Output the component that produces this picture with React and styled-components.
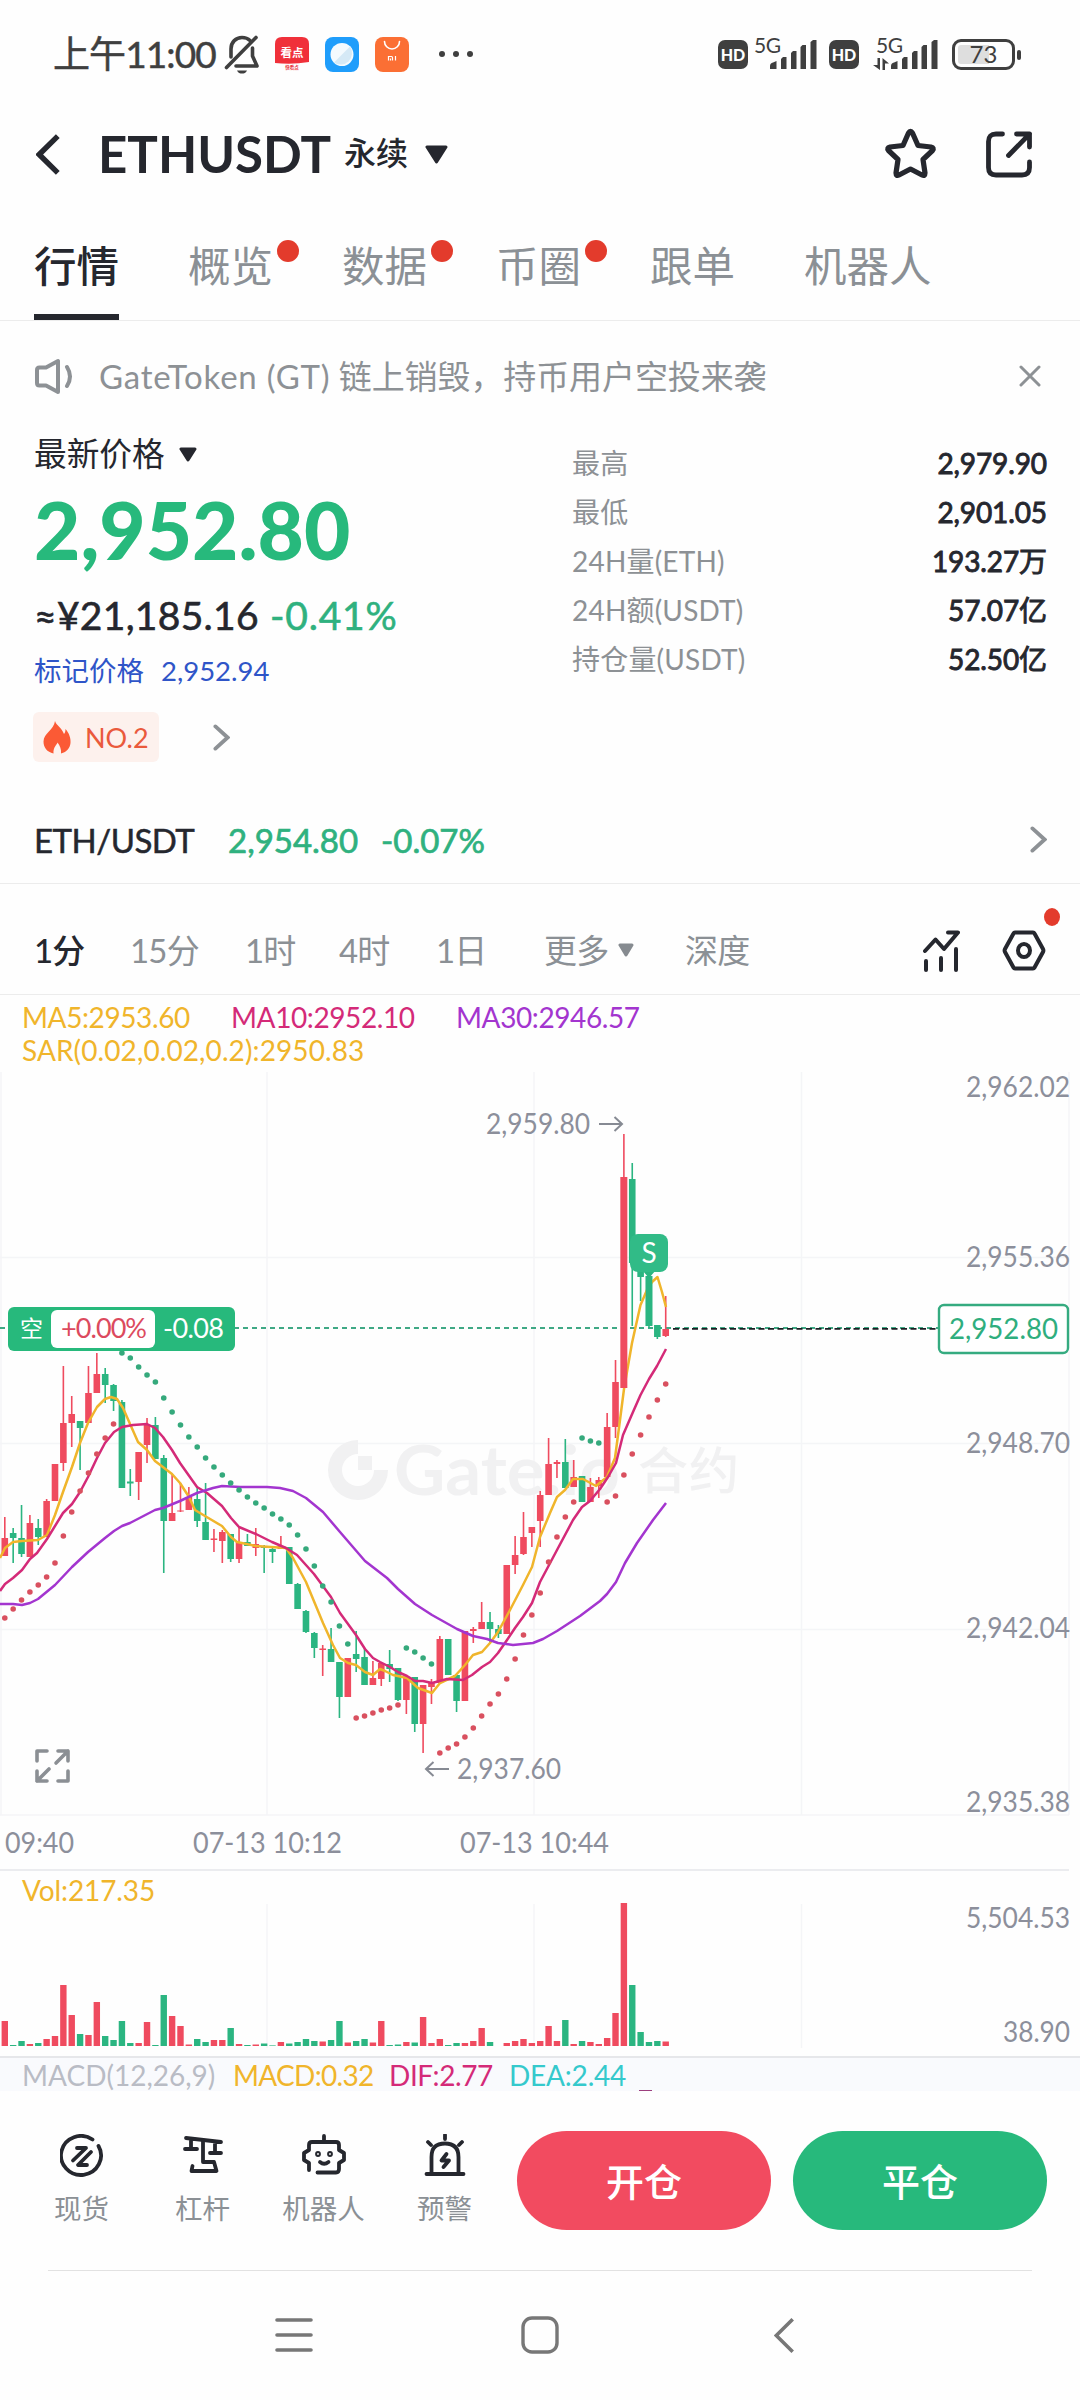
import React from "react";
import styled, { createGlobalStyle } from "styled-components";

const UP = "#ef4b5f";
const DOWN = "#2bb581";
const GRID = "#f4f5f7";
const FONT = 'Lato, "Noto Sans CJK SC", sans-serif';

const STEP = 8.366;
const X0 = 4.8;
const candleX = (i) => X0 + i * STEP;

// [color, wick top, body top, body bottom, wick bottom, volume height]
const candles = [
  ["R", 517, 538, 556, 556, 25],
  ["G", 528, 533, 538, 563, 1],
  ["G", 505, 538, 554, 557, 5],
  ["R", 515, 523, 557, 557, 2],
  ["G", 519, 528, 537, 545, 3],
  ["R", 499, 501, 537, 537, 7],
  ["R", 464, 464, 501, 501, 10],
  ["R", 366, 423, 463, 471, 61],
  ["R", 396, 414, 423, 447, 31],
  ["G", 421, 421, 428, 470, 12],
  ["R", 366, 393, 423, 423, 11],
  ["R", 353, 374, 393, 393, 44],
  ["G", 368, 374, 385, 403, 10],
  ["G", 384, 385, 401, 411, 6],
  ["G", 400, 402, 488, 488, 25],
  ["G", 469, 481.5, 483.5, 496, 3],
  ["R", 452, 452, 482, 500, 3],
  ["R", 418, 425, 445, 463, 24],
  ["G", 417, 425, 459, 459, 1],
  ["G", 455, 458, 521, 573, 51],
  ["R", 474, 513, 521, 521, 30],
  ["R", 483, 510.5, 511.5, 512, 20],
  ["R", 487, 497, 510, 510, 1.5],
  ["G", 487, 499, 521, 527, 7],
  ["G", 483, 522, 540, 540, 4],
  ["R", 529, 538.5, 540, 552, 6],
  ["R", 530, 532, 541, 563, 6],
  ["G", 534, 534, 559, 562, 18],
  ["R", 527, 542, 559, 563, 2],
  ["G", 534, 542, 546, 546, 1],
  ["R", 528, 544, 548, 556, 1.5],
  ["G", 545, 546, 548, 573, 2.5],
  ["G", 548, 549, 552, 563, 0.6],
  ["R", 536, 546, 549, 549, 4],
  ["G", 547, 547, 584, 584, 2.5],
  ["G", 583, 584, 609, 609, 4],
  ["G", 610, 611, 632, 633, 7],
  ["G", 632, 633, 648, 658, 5],
  ["R", 645, 648.5, 650, 676, 4.5],
  ["G", 628, 649, 662, 662, 6],
  ["G", 662, 662, 697, 718, 25],
  ["R", 658, 658, 697, 697, 3.5],
  ["G", 631, 654, 659, 672, 5],
  ["G", 648, 657, 685, 685, 7],
  ["R", 661, 678, 685, 685, 3.5],
  ["R", 662, 663, 679, 686, 25],
  ["G", 650, 664, 669, 682, 1],
  ["G", 668, 668, 700, 701, 1.5],
  ["R", 678, 678, 700, 714, 4],
  ["G", 677, 677, 724, 732, 3.5],
  ["R", 685, 685, 724, 753, 29],
  ["R", 679, 683, 687, 704, 3],
  ["R", 636, 639, 683, 683, 7],
  ["G", 639, 639, 675, 675, 1],
  ["G", 675, 675, 701, 712, 3],
  ["R", 631, 631, 701, 701, 3],
  ["R", 627, 629, 631, 643, 5],
  ["R", 602, 622, 629, 629, 18],
  ["G", 612, 622, 629, 643, 4],
  ["G", 625, 629, 634, 638, 0],
  ["R", 565, 565, 634, 634, 3],
  ["R", 536, 555, 565, 574, 5],
  ["R", 512, 537, 554, 555, 7],
  ["R", 527, 527, 533, 547, 3],
  ["R", 491, 495, 521, 547, 5],
  ["R", 438, 464, 495, 495, 20],
  ["R", 460, 462, 464, 478, 5],
  ["G", 439, 462, 488, 488, 26],
  ["R", 460, 477, 487, 487, 2],
  ["G", 476, 476, 502, 502, 5],
  ["R", 478, 487, 502, 502, 4],
  ["R", 477, 480, 486, 498, 2],
  ["R", 413, 427, 477, 477, 8],
  ["R", 360, 382, 427, 438, 33],
  ["R", 134, 177, 388, 390, 143],
  ["G", 163, 179, 263, 326, 61],
  ["G", 263, 263, 277, 301, 14],
  ["G", 276, 276, 326, 328, 4],
  ["G", 325, 325, 337, 339, 5],
  ["R", 296, 329, 336, 337, 4.5],
];

const ma5 =
  "0,558 5,548 13,542 22,541 38,540 47,535 55,515 63,492 72,467 80,443 88,423 97,407 105,399 111,397 117,399 123,408 138,442 147,450 155,461 172,474 180,483 189,497 195,510 205,516 222,526 231,537 237,542 256,546 286,548 293,558 306,582 323,623 333,645 340,658 348,663 356,665 365,672 373,675 380,669 385,671 393,675 407,678 418,688 432,693 440,683 455,676 465,665 473,655 482,652 490,643 498,632 510,610 523,585 532,567 540,537 550,513 557,497 565,490 573,479 583,479 596,486 607,477 615,458 620,420 624,389 632,343 640.5,305 647,290 652,282 657.5,277 662,292 666,307";
const ma10 =
  "0,591 5,584 13,578 22,570 30,559 37,553 47,539 63,513 72,504 80,492 88,477 97,458 105,443 114,432 122,427 133,425 147,424 155,428 163,437 172,450 180,463 197,487 207,493 222,506 231,518 239,527 256,534 272,542 286,548 297,555 314,574 331,597 340,613 356,635 365,649 373,658 380,662 390,667 398,672 407,676 415,681 423,681 432,683 447,679 463,680 472,675 482,667 490,662 498,653 507,640 515,628 523,617 532,603 540,582 557,550 573,520 582,507 590,501 600,489 608,477 616,463 623,435 633,412 640.5,395 649,379 657,366 666,349";
const ma30 =
  "0,604 13,604 22,605 30,603 38,599 55,585 72,567 88,552 105,538 114,531 122,526 130,523 155,510 163,508 180,501 197,493 213,488 222,486 240,487 267,487 280,488 293,491 306,498 323,512 340,532 365,561 387,578 398,589 415,604 432,615 457,629 473,636 487,639 498,643 513,645 533,643 543,639 557,631 580,616 592,607 600,601 607,594 616,582 625,563 637,543 653,520 666,503";

const sar = [
  { start: 0, color: "#d9505f", ys: [618, 609, 600, 592, 585, 577, 563, 536, 512, 491, 473, 454, 438, 424] },
  {
    start: 14,
    color: "#35a97c",
    ys: [353, 358, 367, 375, 382, 398, 412, 425, 437, 447, 458, 467, 475, 483, 490, 497, 503, 508, 514, 519, 525, 535, 549, 566, 586, 602, 626, 644],
  },
  { start: 42, color: "#d9505f", ys: [718, 716, 713, 710, 708, 705] },
  { start: 48, color: "#35a97c", ys: [648, 652, 658, 664] },
  { start: 52, color: "#d9505f", ys: [753, 748, 744, 737, 728, 716, 704, 694, 679, 659, 635, 615, 593, 562, 537, 517, 502] },
  { start: 69, color: "#35a97c", ys: [438, 441, 443] },
  { start: 72, color: "#d9505f", ys: [502, 496, 475, 454, 435, 417, 400, 384] },
];

const tabs = [
  { label: "行情", active: true },
  { label: "概览", dot: true },
  { label: "数据", dot: true },
  { label: "币圈", dot: true },
  { label: "跟单" },
  { label: "机器人" },
];

const stats = [
  ["最高", "2,979.90"],
  ["最低", "2,901.05"],
  ["24H量(ETH)", "193.27万"],
  ["24H额(USDT)", "57.07亿"],
  ["持仓量(USDT)", "52.50亿"],
];

function BellOff() {
  return (
    <svg width="36" height="40" viewBox="0 0 36 40" fill="none" stroke="#3f3f3f" strokeWidth="3.6" strokeLinecap="round">
      <path d="M7 23V15C7 8 12 3.500 18 3.500C21 3.500 24 4.500 26 6.500" />
      <path d="M28.500 14V22L33 32H12" strokeLinejoin="round" />
      <path d="M32 3.500L2.500 33.500" />
      <path d="M13 36.500H23C22 39 20 39.500 18 39.500C16 39.500 14 39 13 36.500Z" fill="#3f3f3f" stroke="none" />
    </svg>
  );
}

function Signal() {
  return (
    <svg width="48" height="31" viewBox="0 0 48 31" fill="#3f3f3f">
      <path d="M1 30V27Q1 24 4 23.500L7.500 22V30Z" />
      <path d="M12 30V20L14 18H17.500V30Z" />
      <path d="M22 30V14L24 12H27.500V30Z" />
      <path d="M31.500 30V8L33.500 6H37V30Z" />
      <path d="M41.500 30V3L44 1H47.500V30Z" />
    </svg>
  );
}

function Chevron({ w = 17, h = 27, left, color = "#8d9195", sw = 3.8 }) {
  const a = sw / 2 + 0.5;
  const d = left ? `M${w - a} ${a}L${a} ${h / 2}L${w - a} ${h - a}` : `M${a} ${a}L${w - a} ${h / 2}L${a} ${h - a}`;
  return (
    <svg width={w} height={h} viewBox={`0 0 ${w} ${h}`} fill="none" stroke={color} strokeWidth={sw} strokeLinecap={left ? "butt" : "round"}>
      <path d={d} />
    </svg>
  );
}

function Triangle({ w, h, color = "#25272e" }) {
  return (
    <svg width={w} height={h} viewBox={`0 0 ${w} ${h}`} fill={color} stroke={color} strokeWidth="3" strokeLinejoin="round">
      <path d={`M2 2H${w - 2}L${w / 2} ${h - 2}Z`} />
    </svg>
  );
}

function PriceChart() {
  return (
    <Plot width="1080" height="797" viewBox="0 72 1080 797">
      <g stroke={GRID} strokeWidth="1.5">
        {[257.5, 443.5, 629.5, 815].map((y) => (
          <line key={y} x1="0" x2="1069" y1={y} y2={y} />
        ))}
        {[1, 267, 534, 801.5, 1069].map((x) => (
          <line key={x} x1={x} x2={x} y1="72" y2="815" />
        ))}
      </g>

      <g fill="#f1f1f2">
        <path d="M358 440A30 30 0 1 0 388 470H374A16 16 0 1 1 358 454Z" />
        <rect x="358" y="456" width="14" height="14" />
        <text x="394" y="495" fontSize="69" fontWeight="700" textLength="226" lengthAdjust="spacingAndGlyphs">
          Gate.io
        </text>
        <text x="638" y="489" fontSize="50" fontWeight="500" textLength="101">
          合约
        </text>
      </g>

      <g fill="none" strokeWidth="1.8">
        <line x1="0" x2="938" y1="328" y2="328" stroke="#3fa985" strokeDasharray="5 4" />
        <line x1="673" x2="938" y1="328.8" y2="328.8" stroke="#1b1d22" strokeDasharray="6 3.500" />
      </g>

      {candles.map(([c, wt, bt, bb, wb], i) => (
        <g key={i} fill={c === "R" ? UP : DOWN}>
          <rect x={candleX(i) - 0.8} y={wt} width="1.6" height={wb - wt} />
          <rect x={candleX(i) - 3.3} y={bt} width="6.6" height={bb - bt} />
        </g>
      ))}
      <g fill="none" strokeWidth="2.5" strokeLinejoin="round">
        <polyline points={ma5} stroke="#f0b52b" />
        <polyline points={ma10} stroke="#d42a78" />
        <polyline points={ma30} stroke="#a335cf" />
      </g>
      {/* the two big candles cover the MA5 line */}
      {[74, 77].map((i) => (
        <rect
          key={i}
          x={candleX(i) - 3.3}
          y={candles[i][2]}
          width="6.6"
          height={candles[i][3] - candles[i][2]}
          fill={candles[i][0] === "R" ? UP : DOWN}
        />
      ))}
      {sar.map((s) =>
        s.ys.map((y, k) => <circle key={s.start + k} cx={candleX(s.start + k)} cy={y} r="2.8" fill={s.color} />)
      )}

      <g>
        <path d="M642 270L649 278L656 270Z" fill={DOWN} />
        <rect x="630" y="234" width="38" height="38" rx="8" fill="#31bb87" />
        <text x="649" y="263" fontSize="28" fill="#fff" textAnchor="middle">
          S
        </text>
      </g>

      <g>
        <rect x="8" y="307" width="227" height="44" rx="6" fill="#27b97c" />
        <rect x="51" y="310" width="104" height="38" rx="6" fill="#fff" />
        <text x="20" y="337" fontSize="23" fill="#fff">
          空
        </text>
        <text x="61" y="338" fontSize="27" fill="#dc4a5e" textLength="86">
          +0.00%
        </text>
        <text x="163" y="338" fontSize="27" fill="#fff" textLength="61">
          -0.08
        </text>
      </g>

      <g>
        <rect x="939" y="305" width="129" height="48" rx="5" fill="#fff" stroke="#35ab80" strokeWidth="2.4" />
        <text x="949" y="339" fontSize="28" fill="#2fae7e" textLength="109" lengthAdjust="spacingAndGlyphs">
          2,952.80
        </text>
      </g>

      <AxisText x="486" y="134" textLength="104">2,959.80</AxisText>
      <AxisText x="457" y="779" textLength="104">2,937.60</AxisText>
      <g fill="none" stroke="#868a93" strokeWidth="2">
        <path d="M599 124H622M614.500 117L622 124L614.500 131" />
        <path d="M449 769H426M433.500 762L426 769L433.500 776" />
      </g>

      <AxisText x="966" y="97" textLength="104">2,962.02</AxisText>
      <AxisText x="966" y="267" textLength="104">2,955.36</AxisText>
      <AxisText x="966" y="453" textLength="104">2,948.70</AxisText>
      <AxisText x="966" y="638" textLength="104">2,942.04</AxisText>
      <AxisText x="966" y="812" textLength="104">2,935.38</AxisText>

      <AxisText x="5" y="853" textLength="69">09:40</AxisText>
      <AxisText x="193" y="853" textLength="149">07-13 10:12</AxisText>
      <AxisText x="460" y="853" textLength="149">07-13 10:44</AxisText>

      <g fill="none" stroke="#8b8f94" strokeWidth="3.6" strokeLinecap="round" strokeLinejoin="round">
        <path d="M37 761V751H47" />
        <path d="M58 751H68V761M68 751L56 763" />
        <path d="M37 771V781H47M37 781L49 769" />
        <path d="M68 771V781H58" />
      </g>
    </Plot>
  );
}

function VolumeChart() {
  return (
    <Plot width="1080" height="153" viewBox="0 903 1080 153">
      <g stroke={GRID} strokeWidth="1.5">
        {[267, 534, 801.5].map((x) => (
          <line key={x} x1={x} x2={x} y1="904" y2="1048" />
        ))}
      </g>
      {candles.map(([c, , , , , v], i) => (
        <rect key={i} x={candleX(i) - 3.2} y={1046 - v} width="6.4" height={v} fill={c === "R" ? UP : DOWN} />
      ))}
      <AxisText x="966" y="928" textLength="104">5,504.53</AxisText>
      <AxisText x="1003" y="1042" textLength="67">38.90</AxisText>
    </Plot>
  );
}

export default function App() {
  return (
    <Screen>
      <GlobalStyle />

      <StatusBar>
        <Clock>上午11:00</Clock>
        <BellOff />
        <NoticeApps>
          <svg width="34" height="35" viewBox="0 0 34 35">
            <path d="M0 26V7Q0 0 7 0H27Q34 0 34 7V25Q17 28 0 26Z" fill="#f0303a" />
            <text x="17" y="19.500" fontSize="11.500" fontWeight="700" fill="#fff" textAnchor="middle">
              看点
            </text>
            <text x="17" y="32" fontSize="4.500" fontWeight="700" fill="#e8303a" textAnchor="middle">
              快看点
            </text>
          </svg>
          <svg width="34" height="35" viewBox="0 0 34 35">
            <rect width="34" height="35" rx="8" fill="#1f9dfb" />
            <circle cx="17" cy="17.500" r="11.500" fill="#f4fafe" />
            <path d="M25 9.500A11.500 11.500 0 0 1 9 25.500Z" fill="#d5e9f6" />
          </svg>
          <svg width="34" height="35" viewBox="0 0 34 35">
            <rect width="34" height="35" rx="8" fill="#fb6f34" />
            <path d="M9.500 4.500A7.500 7.500 0 0 0 24.500 4.500" fill="none" stroke="#fff" strokeWidth="1.600" strokeLinecap="round" />
            <path d="M13.500 23.500V19.500H16.500Q17.500 19.500 17.500 20.500V23.500M15.500 21.500V23.500M20.500 19V23.500" fill="none" stroke="#fff" strokeWidth="1.200" />
          </svg>
        </NoticeApps>
        <Dots>
          <i />
          <i />
          <i />
        </Dots>
        <StatusRight>
          <HdBadge>HD</HdBadge>
          <Network $w={69} $gap={12}>
            <NetLabel $left={6}>5G</NetLabel>
            <Signal />
          </Network>
          <HdBadge>HD</HdBadge>
          <Network $w={79} $gap={14}>
            <NetLabel $left={17}>5G</NetLabel>
            <svg width="17" height="12" viewBox="0 0 17 12" fill="#3f3f3f">
              <path d="M4.500 0H7V12L0 7H4.500ZM9.500 12V0L16 5.500H12V12Z" />
            </svg>
            <Signal />
          </Network>
          <Battery>
            <b>73</b>
          </Battery>
        </StatusRight>
      </StatusBar>

      <Header>
        <Chevron left w={25} h={43} color="#25272e" sw={5.4} />
        <Pair>ETHUSDT</Pair>
        <PairKind>永续</PairKind>
        <Triangle w={23} h={19} />
        <HeaderActions>
          <svg width="59" height="58" viewBox="0 0 59 58" fill="none" stroke="#25272e" strokeWidth="5.200" strokeLinejoin="round">
            <path d="M27.500 8Q29.500 4.500 31.500 8L37 20.500L50 22Q53.500 22.800 51.500 25.500L42 34.500L44 48Q44 51.500 41 50L29.500 44L18 50Q15 51.500 15 48L17 34.500L7.500 25.500Q5.500 22.800 9 22L22 20.500Z" />
          </svg>
          <svg width="48" height="50" viewBox="0 0 48 50" fill="none" stroke="#25272e" strokeWidth="4.800" strokeLinecap="round" strokeLinejoin="round">
            <path d="M17.500 5H11Q3.500 5 3.500 12.500V38.500Q3.500 46 11 46H37Q44.500 46 44.500 38.500V33" />
            <path d="M31.500 5H44.500V18M44.500 5L23.500 26.500" />
          </svg>
        </HeaderActions>
      </Header>

      <TabBar>
        {tabs.map((t) => (
          <Tab key={t.label} $active={t.active}>
            {t.label}
            {t.dot && <RedDot />}
          </Tab>
        ))}
      </TabBar>

      <Notice>
        <svg width="40" height="37" viewBox="0 0 40 37" fill="none" stroke="#8d9195" strokeWidth="4" strokeLinecap="round" strokeLinejoin="round">
          <path d="M5.500 9.500H12L24 3V34L12 27.500H5.500Q3 27.500 3 25V12Q3 9.500 5.500 9.500Z" />
          <path d="M33 9Q39 18.500 33 28" />
        </svg>
        <p>
          <span>GateToken (GT)</span> 链上销毁，持币用户空投来袭
        </p>
        <svg width="22" height="22" viewBox="0 0 22 22" fill="none" stroke="#8d9195" strokeWidth="3" strokeLinecap="round">
          <path d="M2 2L20 20M20 2L2 20" />
        </svg>
      </Notice>

      <Ticker>
        <TickerMain>
          <PriceLabel>
            最新价格
            <Triangle w={18} h={15} />
          </PriceLabel>
          <LastPrice>2,952.80</LastPrice>
          <Converted>
            <span>≈¥21,185.16</span>
            <Change>-0.41%</Change>
          </Converted>
          <MarkPrice>
            <span>标记价格</span>
            <span>2,952.94</span>
          </MarkPrice>
          <RankRow>
            <RankBadge>
              <svg width="28" height="33" viewBox="0 0 28 33" fill="#fb5a35">
                <path d="M12 0C13 4 19 7 21 13C22 12 22.500 10 22.500 8C26 12 28 17 27.500 22C27 27 24 31 18 32.500C18.500 28 17 25 14.500 21.500C14 24 10 26 10.500 32.500C4 31 .500 26.500 .500 20.500C.500 12 11 9 12 0Z" />
              </svg>
              NO.2
            </RankBadge>
            <Chevron />
          </RankRow>
        </TickerMain>
        <Stats>
          {stats.map(([k, v]) => (
            <StatRow key={k}>
              <span>{k}</span>
              <b>{v}</b>
            </StatRow>
          ))}
        </Stats>
      </Ticker>

      <SpotRow>
        <SpotPair>ETH/USDT</SpotPair>
        <SpotPrice>2,954.80</SpotPrice>
        <SpotPrice>-0.07%</SpotPrice>
        <Chevron />
      </SpotRow>

      <Timeframes>
        <Frame $w={96} $active>1分</Frame>
        <Frame $w={115}>15分</Frame>
        <Frame $w={94}>1时</Frame>
        <Frame $w={97}>4时</Frame>
        <Frame $w={108}>1日</Frame>
        <Frame $w={141}>
          更多
          <Triangle w={16} h={14} color="#868b90" />
        </Frame>
        <Frame $w={66}>深度</Frame>
        <ChartTools>
          <svg width="38" height="43" viewBox="0 0 38 43" fill="none" stroke="#25272e" strokeWidth="4" strokeLinecap="round" strokeLinejoin="round">
            <path d="M3 22L13.500 10.500L22 20L36 3.500H26" />
            <path d="M4 32V41M19 29V41M34 20V41" />
          </svg>
          <svg width="44" height="43" viewBox="0 0 44 43" fill="none" stroke="#25272e" strokeWidth="4" strokeLinejoin="round">
            <path d="M13 3.500H31Q32 3.500 32.500 4.500L41 20Q41.800 21.500 41 23L32.500 38.500Q32 39.500 31 39.500H13Q12 39.500 11.500 38.500L3 23Q2.200 21.500 3 20L11.500 4.500Q12 3.500 13 3.500Z" />
            <ellipse cx="22" cy="21.500" rx="6" ry="6.500" />
          </svg>
          <ToolDot />
        </ChartTools>
      </Timeframes>

      <Legend>
        <LegendRow>
          <LegendText $w={171} $color="#f0b52b">MA5:2953.60</LegendText>
          <LegendText $w={187} $color="#d42a78">MA10:2952.10</LegendText>
          <LegendText $w={187} $color="#a335cf">MA30:2946.57</LegendText>
        </LegendRow>
        <SarText>SAR(0.02,0.02,0.2):2950.83</SarText>
      </Legend>
      <PriceChart />
      <VolumeLegend>Vol:217.35</VolumeLegend>
      <VolumeChart />
      <MacdLegend>
        <LegendText $w={194} $ls={0} $color="#b9bcc5">MACD(12,26,9)</LegendText>
        <LegendText $w={139} $ls={-0.7} $color="#f0b52b">MACD:0.32</LegendText>
        <LegendText $w={103} $color="#d42a78">DIF:2.77</LegendText>
        <LegendText $w={117} $ls={-0.2} $color="#35c9cc">DEA:2.44</LegendText>
        <MacdMark />
      </MacdLegend>

      <ActionBar>
        <Shortcut>
          <svg width="44" height="44" viewBox="0 0 44 44">
            <path d="M32.500 5.500A20 19.500 0 1 0 38.500 12" />
            <path d="M17 14H26L13 26.500M31 18L18 31H27" />
          </svg>
          现货
        </Shortcut>
        <Shortcut>
          <svg width="44" height="44" viewBox="0 0 44 44">
            <path d="M5 4L40 8M10 5V15M4 15H16M34 8V19M29 19H40" />
            <path d="M22 6.500V28H33L35.500 37H10.500L11.500 32" />
          </svg>
          杠杆
        </Shortcut>
        <Shortcut>
          <svg width="44" height="44" viewBox="0 0 44 44">
            <path d="M22 2V8M7 36V29L2 26V19L7 16V11Q7 8 10 8H34Q37 8 37 11V16L42 19V26L37 29V35Q37 38.500 34 38.500H15.500" />
            <path d="M18 28Q22 31.500 26.500 28" />
            <circle cx="16" cy="20" r="1" />
            <circle cx="28" cy="20" r="1" />
          </svg>
          机器人
        </Shortcut>
        <Shortcut>
          <svg width="44" height="44" viewBox="0 0 44 44">
            <path d="M22 1V5M5 8L8 11M39 8L36 11M3.500 40H40.500M8.500 39V23Q8.500 9.500 22 9.500Q35.500 9.500 35.500 23V39" />
            <path d="M23.500 20L18.500 26.500H26L20.500 33" />
          </svg>
          预警
        </Shortcut>
        <TradeButtons>
          <TradeButton $color="#f24b60">开仓</TradeButton>
          <TradeButton $color="#27b97c">平仓</TradeButton>
        </TradeButtons>
      </ActionBar>

      <NavBar>
        <svg width="38" height="36" viewBox="0 0 38 36" stroke="#777" strokeWidth="3.600" strokeLinecap="round">
          <path d="M2 3H36M2 18H36M2 33H36" />
        </svg>
        <svg width="38" height="38" viewBox="0 0 38 38" fill="none" stroke="#777" strokeWidth="3.400">
          <rect x="2" y="2" width="34" height="34" rx="9" />
        </svg>
        <Chevron left w={21} h={37} color="#777" sw={3.6} />
      </NavBar>
    </Screen>
  );
}

const GlobalStyle = createGlobalStyle`
  body {
    margin: 0;
    background: #fff;
  }
  p {
    margin: 0;
  }
`;

const Screen = styled.div`
  width: 1080px;
  height: 2400px;
  overflow: hidden;
  background: #fefefe;
  color: #25272e;
  font-family: ${FONT};
  display: flex;
  flex-direction: column;

  svg {
    display: block;
    flex: none;
  }
`;

const StatusBar = styled.div`
  height: 108px;
  display: flex;
  align-items: center;
  padding: 0 65px 0 53px;
  flex: none;
`;
const Clock = styled.div`
  width: 171px;
  font-size: 37px;
  line-height: 44px;
  letter-spacing: -0.9px;
  color: #3f3f3f;
  white-space: nowrap;
  -webkit-text-stroke: 0.5px #3f3f3f;
`;
const NoticeApps = styled.div`
  display: flex;
  gap: 16px;
  margin-left: 15px;
`;
const Dots = styled.div`
  display: flex;
  gap: 8px;
  margin-left: 30px;

  i {
    width: 6px;
    height: 6px;
    border-radius: 50%;
    background: #3f3f3f;
  }
`;
const StatusRight = styled.div`
  display: flex;
  align-items: center;
  margin-left: auto;
`;
const HdBadge = styled.div`
  width: 30px;
  height: 29px;
  border-radius: 7px;
  background: #3f3f3f;
  color: #fff;
  font-size: 16px;
  font-weight: 900;
  line-height: 29px;
  text-align: center;
`;
const Network = styled.div`
  position: relative;
  width: ${(p) => p.$w}px;
  height: 32px;
  margin-right: ${(p) => p.$gap}px;
  display: flex;
  align-items: flex-end;
  justify-content: flex-end;
`;
const NetLabel = styled.span`
  position: absolute;
  left: ${(p) => p.$left}px;
  top: -4px;
  font-size: 21px;
  line-height: 21px;
  letter-spacing: -0.5px;
  color: #3f3f3f;
`;
const Battery = styled.div`
  position: relative;
  box-sizing: border-box;
  width: 63px;
  height: 31px;
  border: 3px solid #3f3f3f;
  border-radius: 9px;
  background: linear-gradient(90deg, #dedede 60%, #fefefe 60%);
  background-clip: content-box;
  padding: 3px;
  text-align: center;

  b {
    display: block;
    font-size: 24px;
    font-weight: 400;
    line-height: 18px;
    color: #3f3f3f;
  }

  &::after {
    content: "";
    position: absolute;
    right: -9px;
    top: 8px;
    width: 4px;
    height: 10px;
    border-radius: 2px;
    background: #3f3f3f;
  }
`;

const Header = styled.div`
  height: 92px;
  display: flex;
  align-items: center;
  padding: 0 47px 0 36px;
  flex: none;
`;
const Pair = styled.h1`
  margin: 0 0 0 37px;
  width: 246px;
  font-size: 51px;
  line-height: 60px;
`;
const PairKind = styled.span`
  font-size: 32px;
  line-height: 40px;
  font-weight: 500;
  margin: -3px 17px 0 0;
`;
const HeaderActions = styled.div`
  display: flex;
  align-items: center;
  gap: 45px;
  margin-left: auto;
`;

const TabBar = styled.nav`
  height: 121px;
  box-sizing: border-box;
  display: flex;
  gap: 69px;
  padding-left: 34px;
  border-bottom: 1px solid #ececec;
  flex: none;
`;
const Tab = styled.div`
  position: relative;
  box-sizing: border-box;
  height: 120px;
  padding-top: 36px;
  font-size: 42.5px;
  line-height: 60px;
  color: ${(p) => (p.$active ? "#25272e" : "#8b9095")};
  font-weight: ${(p) => (p.$active ? 500 : 400)};
  border-bottom: 6px solid ${(p) => (p.$active ? "#25272e" : "transparent")};
`;
const RedDot = styled.i`
  position: absolute;
  top: 40px;
  right: -26px;
  width: 22px;
  height: 22px;
  border-radius: 50%;
  background: #e33b2c;
`;

const Notice = styled.div`
  height: 110px;
  display: flex;
  align-items: center;
  padding: 0 39px 0 34px;
  color: #8d9195;
  flex: none;

  p {
    flex: 1;
    margin-left: 25px;
    font-size: 33px;
    line-height: 44px;
    letter-spacing: -0.1px;
    white-space: pre;
  }

  p span {
    letter-spacing: 0.8px;
  }
`;

const Ticker = styled.div`
  height: 365px;
  display: flex;
  justify-content: space-between;
  padding: 0 32px 0 34px;
  flex: none;
`;
const TickerMain = styled.div`
  display: flex;
  flex-direction: column;
`;
const PriceLabel = styled.div`
  display: flex;
  align-items: center;
  gap: 14px;
  height: 46px;
  font-size: 32.7px;
  line-height: 46px;
`;
const LastPrice = styled.div`
  margin-top: 6px;
  font-size: 80px;
  font-weight: 900;
  line-height: 92px;
  color: #27b97c;
`;
const Converted = styled.div`
  display: flex;
  gap: 11px;
  margin-top: 15px;
  font-size: 39px;
  line-height: 50px;
  letter-spacing: 0.3px;
  -webkit-text-stroke: 0.6px currentColor;
`;
const Change = styled.span`
  color: #2fb17f;
  letter-spacing: 0.8px;
`;
const MarkPrice = styled.div`
  display: flex;
  gap: 17px;
  margin-top: 12px;
  font-size: 27.5px;
  line-height: 38px;
  color: #2f55c8;
`;
const RankRow = styled.div`
  display: flex;
  align-items: center;
  gap: 54px;
  margin: 22px 0 0 -1px;
`;
const RankBadge = styled.div`
  box-sizing: border-box;
  width: 126px;
  height: 50px;
  padding-left: 10px;
  display: flex;
  align-items: center;
  gap: 14px;
  border-radius: 6px;
  background: #fdf1ed;
  color: #ea5a3c;
  font-size: 27px;
`;
const Stats = styled.div`
  width: 475px;
  padding-top: 8px;
  margin-right: 1px;
`;
const StatRow = styled.div`
  display: flex;
  justify-content: space-between;
  font-size: 28px;
  height: 49px;
  line-height: 49px;
  letter-spacing: 0.2px;
  color: #8d9195;

  b {
    color: #25272e;
    font-weight: 400;
    letter-spacing: -0.1px;
    -webkit-text-stroke: 0.9px currentColor;
  }
`;

const SpotRow = styled.div`
  box-sizing: border-box;
  height: 88px;
  display: flex;
  align-items: center;
  padding: 0 33px 0 34px;
  border-bottom: 1px solid #ececec;
  flex: none;

  svg {
    margin-left: auto;
  }
`;
const SpotPair = styled.span`
  width: 194px;
  font-size: 33px;
  letter-spacing: -0.5px;
  -webkit-text-stroke: 0.5px currentColor;
`;
const SpotPrice = styled.span`
  width: 153px;
  font-size: 33px;
  color: #2fb17f;
  -webkit-text-stroke: 0.7px currentColor;
`;

const Timeframes = styled.div`
  box-sizing: border-box;
  height: 111px;
  display: flex;
  align-items: center;
  padding: 23px 34px 0 34px;
  border-bottom: 1px solid #ececec;
  flex: none;
`;
const Frame = styled.div`
  width: ${(p) => p.$w}px;
  margin-top: -1px;
  display: flex;
  align-items: center;
  gap: 10px;
  font-size: 33px;
  line-height: 44px;
  letter-spacing: -0.8px;
  color: ${(p) => (p.$active ? "#25272e" : "#8b9095")};
  font-weight: ${(p) => (p.$active ? 500 : 400)};
`;
const ChartTools = styled.div`
  position: relative;
  display: flex;
  gap: 42px;
  margin-left: auto;
`;
const ToolDot = styled.i`
  position: absolute;
  right: -14px;
  top: -21px;
  width: 16px;
  height: 18px;
  border-radius: 50%;
  background: #e33b2c;
`;

const Legend = styled.div`
  height: 77px;
  padding-left: 22px;
  box-sizing: border-box;
  padding-top: 5px;
  flex: none;
`;
const LegendRow = styled.div`
  display: flex;
  gap: 38px;
  height: 33px;
`;
const LegendText = styled.span`
  width: ${(p) => p.$w}px;
  color: ${(p) => p.$color};
  font-size: 28px;
  line-height: 34px;
  letter-spacing: ${(p) => p.$ls ?? -0.4}px;
  white-space: nowrap;
`;
const SarText = styled.div`
  color: #f0b52b;
  font-size: 28px;
  line-height: 34px;
  letter-spacing: 0.1px;
`;
const Plot = styled.svg`
  font-family: ${FONT};
`;
const AxisText = styled.text.attrs({ lengthAdjust: "spacingAndGlyphs" })`
  font-size: 28px;
  fill: #8c8f9b;
`;
const VolumeLegend = styled.div`
  box-sizing: border-box;
  height: 34px;
  width: 1069px;
  padding-left: 22px;
  border-top: 2px solid #ebecef;
  color: #f0b52b;
  font-size: 28px;
  line-height: 38px;
  letter-spacing: -0.1px;
  flex: none;
`;
const MacdLegend = styled.div`
  box-sizing: border-box;
  height: 35px;
  display: flex;
  gap: 17px;
  padding-left: 22px;
  border-top: 2px solid #e6e7ea;
  background: #f9fafd;
  flex: none;
`;
const MacdMark = styled.i`
  align-self: flex-end;
  width: 13px;
  height: 1px;
  margin-left: -4px;
  background: #9c3f7e;
`;

const ActionBar = styled.div`
  height: 179px;
  box-sizing: border-box;
  display: flex;
  padding: 40px 33px 0 21px;
  flex: none;
`;
const Shortcut = styled.div`
  width: 121px;
  padding-top: 3px;
  display: flex;
  flex-direction: column;
  align-items: center;
  gap: 13px;
  font-size: 27.5px;
  line-height: 36px;
  color: #8b9095;

  svg {
    fill: none;
    stroke: #25272e;
    stroke-width: 3.8px;
    stroke-linecap: round;
    stroke-linejoin: round;
  }
`;
const TradeButtons = styled.div`
  display: flex;
  gap: 22px;
  margin-left: auto;
`;
const TradeButton = styled.button`
  width: 254px;
  height: 99px;
  padding: 0 0 3px;
  border: 0;
  border-radius: 50px;
  background: ${(p) => p.$color};
  color: #fff;
  font-family: inherit;
  font-size: 38px;
  font-weight: 500;
`;

const NavBar = styled.div`
  margin: 0 48px;
  height: 130px;
  box-sizing: border-box;
  padding: 0 237px 1px 227px;
  border-top: 1px solid #e2e2e2;
  display: flex;
  align-items: center;
  justify-content: space-between;

  svg:nth-child(2) {
    margin-left: -7px;
  }
`;
